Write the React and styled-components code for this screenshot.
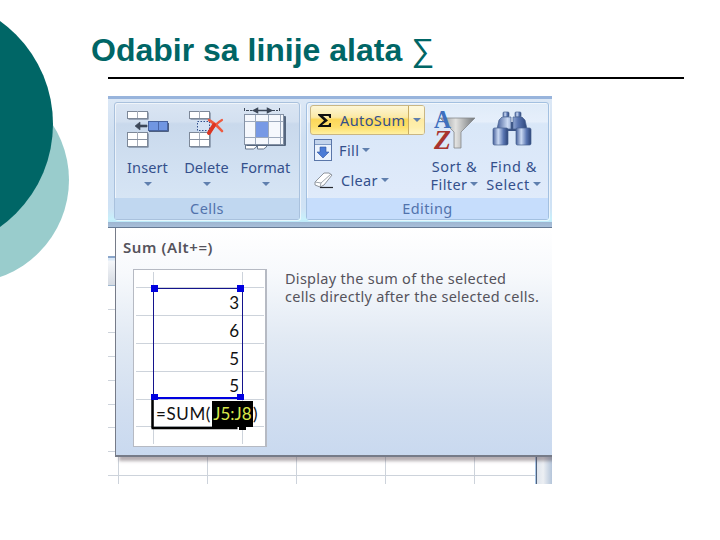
import React from 'react'
import styled, { createGlobalStyle } from 'styled-components'

const colors = {
  TEAL: '#006666',
  TEAL_LIGHT: '#99cccc',
  LABEL: '#34508c',
  FOOTER: '#5273ac',
  TIP_TEXT: '#55535c',
  GRID: '#cdd3db',
  RANGE: '#0000e0'
}

const GlobalStyle = createGlobalStyle`
  body {
    margin: 0;
    background: #fff;
  }
`

const Slide = styled.div`
  position: relative;
  display: flex;
  flex-direction: column;
  width: 720px;
  height: 540px;
  overflow: hidden;
  box-sizing: border-box;
  padding-left: 108px;
`

const Decoration = styled.svg`
  position: absolute;
  left: 0;
  top: 0;
`

const Title = styled.h1`
  margin: 0 0 0 -17px;
  padding-top: 29px;
  height: 77px;
  box-sizing: border-box;
  font: bold 32px/42px 'Liberation Sans', sans-serif;
  white-space: nowrap;
  color: ${colors.TEAL};
`

const Sigma = styled.span`
  font-weight: normal;
`

const Rule = styled.div`
  width: 576px;
  height: 2px;
  background: #000;
`

const Excel = styled.div`
  position: relative;
  display: flex;
  flex-direction: column;
  width: 444px;
  height: 388px;
  margin-top: 17px;
  overflow: hidden;
  font-family: 'Noto Sans', sans-serif;
`

const Ribbon = styled.div`
  display: flex;
  gap: 6px;
  height: 132px;
  box-sizing: border-box;
  padding: 3px 3px 7px 6px;
  border-top: 3px solid #98b4dc;
  border-bottom: 1px solid #667a94;
  background: linear-gradient(#dce8f6, #cfdff1 30%, #cfe2f5 85%, #c8f0fb 94%, #bdeafa 96%, #9db6d2 96.1%, #a9bfd9);
`

const Group = styled.div`
  display: flex;
  flex-direction: column;
  width: ${props => props.$width}px;
  height: 118px;
  box-sizing: border-box;
  border: 1px solid ${props => (props.$active ? '#a3c0e0' : '#a9c1dd')};
  border-radius: 3px;
  box-shadow: inset 1px 1px 0 rgba(255, 255, 255, 0.6), 1px 1px 0 rgba(255, 255, 255, 0.6);
  background: ${props =>
    props.$active
      ? 'linear-gradient(#dfebf8, #e6effb 16%, #d9e7f8 18%, #dfeafa 75%, #e1edfb)'
      : 'linear-gradient(#dae5f3, #d3e0f0 16%, #c9d9ec 18%, #d2e1f2 60%, #dae8f6)'};
`

const GroupBody = styled.div`
  display: flex;
  flex: 1;
  padding: 0 3px;
`

const GroupFooter = styled.div`
  height: 21px;
  font-size: 14.5px;
  line-height: 21px;
  text-align: center;
  letter-spacing: 0.4px;
  color: ${colors.FOOTER};
  background: ${props => (props.$active ? '#c6ddfc' : '#c0d7f0')};
`

const BigButton = styled.div`
  display: flex;
  flex-direction: column;
  align-items: center;
  width: 59px;
`

const BigIcon = styled.svg`
  display: block;
  width: 58px;
  height: 54px;
`

const Label = styled.span`
  display: flex;
  align-items: center;
  gap: 3px;
  height: ${props => props.$height || 20}px;
  font-size: 14.5px;
  line-height: 20px;
  letter-spacing: ${props => props.$spacing || 0}px;
  white-space: nowrap;
  color: ${colors.LABEL};
`

const Arrow = styled.i`
  width: 0;
  height: 0;
  margin-top: ${props => props.$top || 0}px;
  border: 4px solid transparent;
  border-top-color: #5f7fae;
  border-bottom: 0;
`

const SmallButtons = styled.div`
  display: flex;
  flex-direction: column;
  width: 115px;
  padding-top: 2px;
`

const SmallButton = styled.div`
  display: flex;
  align-items: center;
  gap: 7px;
  height: 30px;
  padding-left: 4px;
`

const AutoSumButton = styled.div`
  display: flex;
  height: 30px;
  box-sizing: border-box;
  border: 1px solid #c9b684;
  border-radius: 3px;
  background: linear-gradient(#fdf6d6, #fbe9a6 40%, #fcd759 48%, #fddf6b 75%, #fff0a0);
`

const AutoSumMain = styled.div`
  display: flex;
  align-items: center;
  gap: 5px;
  width: 98px;
  box-sizing: border-box;
  padding-left: 4px;
  border-right: 1px solid #c9ac63;
`

const AutoSumMenu = styled.div`
  display: flex;
  flex: 1;
  align-items: center;
  justify-content: center;
  background: rgba(255, 252, 225, 0.55);
`

const Sheet = styled.div`
  display: flex;
  flex-direction: column;
  flex: 1;
`

const FormulaBar = styled.div`
  height: 28px;
  background: #fff;
`

const ColumnHeads = styled.div`
  height: 30px;
  box-sizing: border-box;
  border-top: 2px solid #8ba6ca;
  border-bottom: 1px solid #9eb6ce;
  background: linear-gradient(#d9e8f7 2px, #f5f7fa 3px, #d5dae2);
`

const Cells = styled.div`
  display: flex;
  flex: 1;
  justify-content: flex-end;
  background-image: repeating-linear-gradient(transparent 0 22.7px, ${colors.GRID} 22.7px 23.7px),
    linear-gradient(90deg, ${colors.GRID} 1px, transparent 1px);
  background-size: auto, 89px 100%;
  background-position: 0 0, 10px 0;
`

const Scrollbar = styled.div`
  width: 17px;
  box-sizing: border-box;
  border-left: 1px solid #a9c6e6;
  box-shadow: inset 1px 0 0 #52647f;
  background: linear-gradient(90deg, #dce3ec, #eceff3 45%, #b4c5da);
`

const Tooltip = styled.div`
  position: absolute;
  left: 7px;
  top: 132px;
  width: 460px;
  height: 229px;
  box-sizing: border-box;
  border: 1px solid #767b88;
  border-top: 0;
  border-bottom-width: 2px;
  background: linear-gradient(#fff, #f7f9fc 20%, #e2eaf4 48%, #d1def0 80%, #c9d9ef);
  box-shadow: 4px 4px 3px rgba(90, 75, 85, 0.45);
`

const TooltipTitle = styled.div`
  padding: 9px 0 0 7px;
  height: 41px;
  box-sizing: border-box;
  font-size: 15px;
  font-weight: 600;
  line-height: 20px;
  letter-spacing: 0.6px;
  color: ${colors.TIP_TEXT};
`

const TooltipBody = styled.div`
  display: flex;
  gap: 18px;
  padding-left: 17px;
`

const Description = styled.p`
  margin: 0;
  font-size: 14.5px;
  line-height: 18px;
  letter-spacing: 0.28px;
  white-space: nowrap;
  color: ${colors.TIP_TEXT};
`

const Line = styled.span`
  display: block;
`

const Preview = styled.div`
  position: relative;
  width: 134px;
  height: 178px;
  box-sizing: border-box;
  border: 1px solid #b6bac3;
  border-right-width: 2px;
  background: #fff;
`

const PreviewGrid = styled.svg`
  position: absolute;
  left: 0;
  top: 0;
`

const PreviewRows = styled.div`
  position: relative;
  display: flex;
  flex-direction: column;
  padding-top: 20px;
  font-family: Lato, 'Open Sans', sans-serif;
  font-size: 17px;
  color: #111;
`

const ValueRow = styled.div`
  height: 27.8px;
  padding-right: 26px;
  line-height: 26px;
  text-align: right;
`

const FormulaRow = styled.div`
  display: flex;
  height: 26px;
  padding-left: 22px;
  line-height: 26px;
  white-space: nowrap;
`

const FormulaStart = styled.span`
  width: 56px;
  letter-spacing: 0.6px;
`

const Selected = styled.span`
  width: 41px;
  text-align: center;
  color: #d8e84a;
  background: #000;
`

const SheetCells = ({ x, y, h }) => (
  <g>
    <rect x={x + 1.5} y={y + 1.5} width="20" height={h} fill="#5d6b80" />
    <rect x={x + 0.5} y={y + 0.5} width="20" height={h} fill="#fff" stroke="#7d8898" />
    <path d={`M${x + 10.5} ${y}v${h}`} stroke="#a5acb8" />
    {h > 9 && <path d={`M${x} ${y + 7.5}h20`} stroke="#8993a3" />}
  </g>
)

const InsertIcon = () => (
  <BigIcon viewBox="0 0 58 54">
    <SheetCells x={8} y={8} h={7} />
    <SheetCells x={8} y={29} h={14} />
    <rect x="29.5" y="18.5" width="19" height="9" fill="#7096e2" stroke="#47639f" />
    <path d="M39.5 19v8" stroke="#4865a8" />
    <path d="M30 28.500h19.500V20" fill="none" stroke="#4d5f80" />
    <path d="M16 23l5-4v3h7v2h-7v3z" fill="#3d4859" stroke="#3d4859" strokeWidth=".6" />
  </BigIcon>
)

const DeleteIcon = () => (
  <BigIcon viewBox="0 0 58 54">
    <SheetCells x={11} y={8} h={7} />
    <SheetCells x={11} y={29} h={14} />
    <rect x="19.500" y="18.500" width="12" height="9" fill="#d5e3f5" stroke="#33508d" strokeDasharray="1.500 1.500" />
    <path d="M31 17q7 4 13 11" fill="none" stroke="#ee5a40" strokeWidth="2.600" strokeLinecap="round" />
    <path d="M44 17q-7 4-12 12" fill="none" stroke="#ee5a40" strokeWidth="2.200" strokeLinecap="round" />
    <path d="M36 22l-5 8" stroke="#dc3622" strokeWidth="4" strokeLinecap="round" />
  </BigIcon>
)

const FormatIcon = () => (
  <BigIcon viewBox="0 0 58 54">
    <path d="M7.500 5v4M42.500 5v4M9 7.500h6M35 7.500h6" stroke="#3c4757" strokeDasharray="3 1" />
    <path d="M18 7.500h15M20.500 5.500l-4 2 4 2zM30.500 5.500l4 2-4 2z" fill="#3c4757" stroke="#3c4757" strokeWidth="1.500" />
    <path d="M8.500 41v5h8l3-2v-3zM20.500 41v5h6l3-2v-3z" fill="#fff" stroke="#65758a" />
    <rect x="9" y="13" width="40" height="30" rx="1" fill="#56677f" />
    <rect x="7.500" y="11.500" width="39" height="30" fill="#f5f8fd" stroke="#8592a5" />
    <path d="M8 18.500h38M8 34.500h38M18.500 12v29M31.500 12v29M43.500 12v29" stroke="#9ca9bc" />
    <rect x="19" y="19" width="12" height="15" fill="#7799e5" />
  </BigIcon>
)

const SortIcon = () => (
  <BigIcon viewBox="0 0 58 54">
    <defs>
      <linearGradient id="funnel">
        <stop offset="0" stopColor="#8a8d92" />
        <stop offset=".45" stopColor="#e2e2e0" />
        <stop offset="1" stopColor="#707478" />
      </linearGradient>
    </defs>
    <path d="M14 15h35l-14 14v16h-7V29z" fill="url(#funnel)" stroke="#85888c" strokeWidth=".8" />
    <text x="8" y="25" textLength="17" lengthAdjust="spacingAndGlyphs" fontFamily="Liberation Serif" fontWeight="bold" fontSize="26" fill="#3e6fbe">A</text>
    <text x="8" y="46" textLength="17" lengthAdjust="spacingAndGlyphs" fontFamily="Liberation Serif" fontWeight="bold" fontStyle="italic" fontSize="27" fill="#a8342f">Z</text>
  </BigIcon>
)

const FindIcon = () => (
  <BigIcon viewBox="0 0 58 54">
    <defs>
      <linearGradient id="barrel">
        <stop offset="0" stopColor="#455f9a" />
        <stop offset=".35" stopColor="#cbdaf3" />
        <stop offset=".7" stopColor="#5a76b2" />
        <stop offset="1" stopColor="#2c4478" />
      </linearGradient>
    </defs>
    <rect x="22" y="19" width="10" height="9" fill="#3a5283" />
    <g fill="url(#barrel)" stroke="#48618f" strokeWidth=".7">
      <rect x="18" y="9" width="6" height="5" rx="1" />
      <rect x="30" y="9" width="6" height="5" rx="1" />
      <path d="M14 17l3-3h9v12H12zM40 17l-3-3h-9v12h14z" />
      <rect x="8" y="25" width="15" height="17" rx="1.500" />
      <rect x="31" y="25" width="15" height="17" rx="1.500" />
    </g>
  </BigIcon>
)

const FillIcon = () => (
  <svg width="18" height="23" viewBox="0 0 18 23">
    <rect x=".5" y=".5" width="17" height="21" fill="#eaf2fd" stroke="#5a76a8" />
    <rect x="1" y="1" width="16" height="4" fill="#c3d4ec" />
    <path d="M1 5.500h16" stroke="#7f9ac4" />
    <path d="M6 8h6v5h3l-6 6-6-6h3z" fill="#4a7bd6" stroke="#3154a0" strokeWidth=".6" />
  </svg>
)

const EraserIcon = () => (
  <svg width="20" height="18" viewBox="0 0 20 18">
    <path d="M1 11L10 2h5l3 2-8 10-4 2-5-2z" fill="#fff" stroke="#8e949d" />
    <path d="M1 11l6 1 10-9M7 12l-1 4" fill="none" stroke="#9da3aa" />
    <path d="M6 16.500h13" stroke="#26282e" strokeWidth="1.200" />
  </svg>
)

const SumIcon = () => (
  <svg width="20" height="20" viewBox="0 0 20 20">
    <path d="M3 4h13v4h-1.500l-1-2H8l5 4.500L7 15h6.500l1-2H16v4H3v-1l6-5.500L3 5z" fill="#111" />
  </svg>
)

const values = [3, 6, 5, 5]

const SumPreview = () => (
  <Preview>
    <PreviewGrid width="131" height="176">
      <path
        d="M2 17.500h128M2 45.500h128M2 73.500h128M2 101.500h128M2 129.500h128M2 156.500h128M19.500 2v172M108.500 2v172"
        stroke={colors.GRID}
      />
      <path d="M19.500 128V18.500h89V128" fill="none" stroke="#14148c" />
      <path d="M19 128h90" stroke={colors.RANGE} strokeWidth="2" />
      <path d="M18.500 130v28M17.500 158h86" stroke="#000" strokeWidth="2.500" />
      <path d="M105 156h7v4h-7z" fill="#000" />
      <path d="M17 15h7v7h-7zM103 15h7v7h-7zM17 124h7v6h-7zM103 124h7v6h-7z" fill={colors.RANGE} />
    </PreviewGrid>
    <PreviewRows>
      {values.map((value, i) => (
        <ValueRow key={i}>{value}</ValueRow>
      ))}
      <FormulaRow>
        <FormulaStart>=SUM(</FormulaStart>
        <Selected>J5:J8</Selected>
        <span>)</span>
      </FormulaRow>
    </PreviewRows>
  </Preview>
)

const App = () => (
  <Slide>
    <GlobalStyle />
    <Decoration width="70" height="290">
      <circle cx="-33.700" cy="180" r="102.700" fill={colors.TEAL_LIGHT} />
      <circle cx="-73.600" cy="124" r="126.600" fill={colors.TEAL} />
    </Decoration>
    <Title>
      Odabir sa linije alata <Sigma>∑</Sigma>
    </Title>
    <Rule />

    <Excel>
      <Ribbon>
        <Group $width={186}>
          <GroupBody>
            <BigButton>
              <InsertIcon />
              <Label $spacing={0.1}>Insert</Label>
              <Arrow $top={5} />
            </BigButton>
            <BigButton>
              <DeleteIcon />
              <Label $spacing={0.1}>Delete</Label>
              <Arrow $top={5} />
            </BigButton>
            <BigButton>
              <FormatIcon />
              <Label $spacing={0.1}>Format</Label>
              <Arrow $top={5} />
            </BigButton>
          </GroupBody>
          <GroupFooter>Cells</GroupFooter>
        </Group>

        <Group $width={243} $active>
          <GroupBody>
            <SmallButtons>
              <AutoSumButton>
                <AutoSumMain>
                  <SumIcon />
                  <Label $spacing={0.4}>AutoSum</Label>
                </AutoSumMain>
                <AutoSumMenu>
                  <Arrow />
                </AutoSumMenu>
              </AutoSumButton>
              <SmallButton>
                <FillIcon />
                <Label $spacing={0.4}>
                  Fill <Arrow />
                </Label>
              </SmallButton>
              <SmallButton>
                <EraserIcon />
                <Label $spacing={0.3}>
                  Clear <Arrow />
                </Label>
              </SmallButton>
            </SmallButtons>
            <BigButton>
              <SortIcon />
              <Label $height={18} $spacing={0.5}>Sort &amp;</Label>
              <Label $height={17} $spacing={0.4}>
                Filter <Arrow />
              </Label>
            </BigButton>
            <BigButton>
              <FindIcon />
              <Label $height={18} $spacing={0.6}>Find &amp;</Label>
              <Label $height={17} $spacing={0.5}>
                Select <Arrow />
              </Label>
            </BigButton>
          </GroupBody>
          <GroupFooter $active>Editing</GroupFooter>
        </Group>
      </Ribbon>

      <Sheet>
        <FormulaBar />
        <ColumnHeads />
        <Cells>
          <Scrollbar />
        </Cells>
      </Sheet>

      <Tooltip>
        <TooltipTitle>Sum (Alt+=)</TooltipTitle>
        <TooltipBody>
          <SumPreview />
          <Description>
            <Line>Display the sum of the selected</Line>
            <Line>cells directly after the selected cells.</Line>
          </Description>
        </TooltipBody>
      </Tooltip>
    </Excel>
  </Slide>
)

export default App
